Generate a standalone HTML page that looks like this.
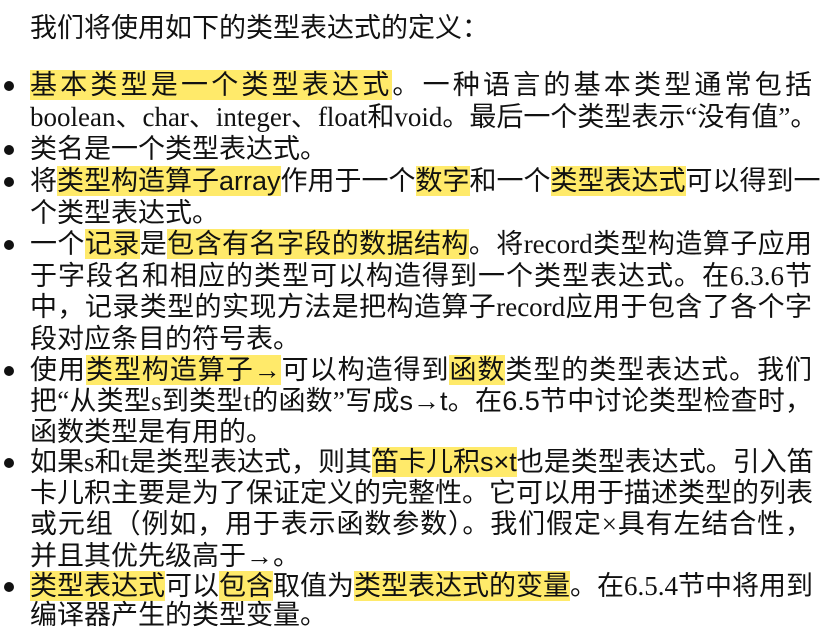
<!DOCTYPE html>
<html><head><meta charset="utf-8"><style>
body{margin:0;background:#fff;width:823px;height:640px;overflow:hidden;position:relative;font-family:"Liberation Serif","WenQuanYi Zen Hei",serif;font-size:27px;color:#111}
.l{position:absolute;left:30px;width:782px;height:32px;line-height:32px;white-space:nowrap;text-align:justify;text-align-last:justify}
.e{text-align-last:left}
.h{background:#ffea6a}
.s{font-family:"WenQuanYi Zen Hei",sans-serif}
.b{position:absolute;left:4px;width:10px;height:10px;border-radius:50%;background:#111}
</style></head><body>
<div class="l e" style="top:12px">我们将使用如下的类型表达式的定义：</div>

<div class="b" style="top:81px"></div>
<div class="l" style="top:69px"><span class="h">基本类型是一个类型表达式</span>。一种语言的基本类型通常包括</div>
<div class="l" style="top:101px">boolean、char、integer、float和void。最后一个类型表示“没有值”。</div>
<div class="b" style="top:145px"></div>
<div class="l e" style="top:133px">类名是一个类型表达式。</div>
<div class="b" style="top:177px"></div>
<div class="l" style="top:165px">将<span class="h">类型构造算子<span class="s">array</span></span>作用于一个<span class="h">数字</span>和一个<span class="h">类型表达式</span>可以得到一</div>
<div class="l e" style="top:197px">个类型表达式。</div>
<div class="b" style="top:240px"></div>
<div class="l" style="top:228px">一个<span class="h">记录</span>是<span class="h">包含有名字段的数据结构</span>。将record类型构造算子应用</div>
<div class="l" style="top:260px">于字段名和相应的类型可以构造得到一个类型表达式。在6.3.6节</div>
<div class="l" style="top:291px">中，记录类型的实现方法是把构造算子record应用于包含了各个字</div>
<div class="l e" style="top:323px">段对应条目的符号表。</div>
<div class="b" style="top:366px"></div>
<div class="l" style="top:354px">使用<span class="h">类型构造算子→</span>可以构造得到<span class="h">函数</span>类型的类型表达式。我们</div>
<div class="l" style="top:385px">把“从类型s到类型t的函数”写成<span class="s">s→t</span>。在<span class="s">6.5</span>节中讨论类型检查时，</div>
<div class="l e" style="top:416px">函数类型是有用的。</div>
<div class="b" style="top:458px"></div>
<div class="l" style="top:446px">如果s和t是类型表达式，则其<span class="h">笛卡儿积<span class="s">s×t</span></span>也是类型表达式。引入笛</div>
<div class="l" style="top:477px">卡儿积主要是为了保证定义的完整性。它可以用于描述类型的列表</div>
<div class="l" style="top:508px">或元组（例如，用于表示函数参数）。我们假定×具有左结合性，</div>
<div class="l e" style="top:540px">并且其优先级高于→。</div>
<div class="b" style="top:582px"></div>
<div class="l" style="top:570px"><span class="h">类型表达式</span>可以<span class="h">包含</span>取值为<span class="h">类型表达式的变量</span>。在6.5.4节中将用到</div>
<div class="l e" style="top:599px">编译器产生的类型变量。</div>
</body></html>
